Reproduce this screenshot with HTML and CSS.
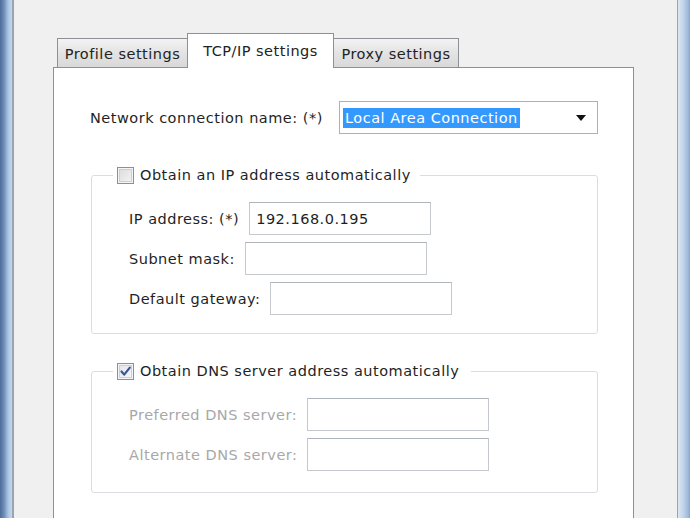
FILE: index.html
```html
<!DOCTYPE html>
<html>
<head>
    <title>Network settings</title>
    <link rel="stylesheet" href="styles.css">
</head>
<body>
    <div class="window">
        <div class="frame frame-left"></div>

        <div class="dialog">
            <div class="tabs">
                <div class="tab tab-profile">Profile settings</div>
                <div class="tab tab-tcp active">TCP/IP settings</div>
                <div class="tab tab-proxy">Proxy settings</div>
            </div>

            <div class="panel">
                <div class="conn-row">
                    <label>Network connection name: (*)</label>
                    <div class="combo">
                        <span class="combo-value">Local Area Connection</span>
                        <span class="combo-arrow"></span>
                    </div>
                </div>

                <fieldset class="group group-ip">
                    <legend>
                        <span class="check"></span>
                        Obtain an IP address automatically
                    </legend>
                    <div class="field">
                        <label>IP address: (*)</label>
                        <input type="text" value="192.168.0.195" readonly>
                    </div>
                    <div class="field">
                        <label>Subnet mask:</label>
                        <input type="text" readonly>
                    </div>
                    <div class="field">
                        <label>Default gateway:</label>
                        <input type="text" readonly>
                    </div>
                </fieldset>

                <fieldset class="group group-dns">
                    <legend>
                        <span class="check checked">
                            <svg width="15" height="15" viewBox="0 0 15 15">
                                <path d="M3.5 7.5 L6.2 10.6 L11.8 3.6" fill="none" stroke="#3f5592" stroke-width="2.2" stroke-linecap="round" stroke-linejoin="round"/>
                            </svg>
                        </span>
                        Obtain DNS server address automatically
                    </legend>
                    <div class="field disabled">
                        <label>Preferred DNS server:</label>
                        <input type="text" disabled>
                    </div>
                    <div class="field disabled">
                        <label>Alternate DNS server:</label>
                        <input type="text" disabled>
                    </div>
                </fieldset>
            </div>
        </div>

        <div class="frame frame-right"></div>
    </div>
</body>
</html>
```

FILE: styles.css
```css
html, body {
    margin: 0;
    padding: 0;
}
body {
    font-family: "DejaVu Sans", Verdana, sans-serif;
    font-size: 14.5px;
    letter-spacing: 0.5px;
    color: #1f1f1f;
    background: #f0f0f0;
}
.window {
    display: flex;
    height: 518px;
    overflow: hidden;
}
.frame {
    flex: none;
}
.frame-left {
    width: 12px;
    border-right: 2px solid #9aa4b0;
    background: linear-gradient(to right, #4d6c98 0, #6d8db8 4px, #a9c3e0 8px, #c5d8ec 12px);
}
.frame-right {
    width: 12px;
    border-left: 1px solid #9aa4b0;
    background: linear-gradient(to right, #dbe7f3 0, #c2d5ea 5px, #a7c0dd 9px, #8aa7cc 12px);
}
.dialog {
    flex: 1;
    padding: 33px 0 0 39px;
    background: #f0f0f0;
}

/* tabs */
.tabs {
    display: flex;
    align-items: flex-end;
    padding-left: 4px;
}
.tab {
    box-sizing: border-box;
    height: 29px;
    padding-top: 2px;
    display: flex;
    align-items: center;
    justify-content: center;
    border: 1px solid #8e9096;
    border-bottom: none;
    background: linear-gradient(#f3f3f3, #e3e3e3 50%, #d9d9d9);
    color: #222;
}
.tab-profile {
    width: 130px;
    border-right: none;
}
.tab-tcp {
    width: 147px;
}
.tab-proxy {
    width: 125px;
    border-left: none;
}
.tab.active {
    height: 35px;
    padding-top: 0;
    margin-bottom: -1px;
    background: #fff;
    position: relative;
    z-index: 1;
}

/* panel */
.panel {
    width: 581px;
    height: 470px;
    box-sizing: border-box;
    border: 1px solid #8e9096;
    background: #fff;
    padding: 33px 0 0 37px;
}
.conn-row {
    width: 507px;
    height: 33px;
    display: flex;
    align-items: center;
    margin-bottom: 31px;
}
.conn-row label {
    margin-left: -1px;
}
.combo {
    margin-left: auto;
    box-sizing: border-box;
    width: 259px;
    height: 33px;
    border: 1px solid #aab1bb;
    display: flex;
    align-items: center;
    padding: 0 11px 0 3px;
}
.combo-value {
    background: #3399ff;
    color: #fff;
    line-height: 20px;
    padding: 0 2px;
}
.combo-arrow {
    margin-left: auto;
    width: 0;
    height: 0;
    border-left: 5px solid transparent;
    border-right: 5px solid transparent;
    border-top: 6px solid #111;
}

/* group boxes */
.group {
    box-sizing: border-box;
    width: 507px;
    margin: 0;
    border: 1px solid #d9dde2;
    border-radius: 3px;
    padding: 17px 20px 18px 21px;
}
.group-dns {
    margin-top: 27px;
    padding-bottom: 21px;
}
legend {
    display: flex;
    align-items: center;
    gap: 6px;
    line-height: 20px;
    padding: 0 9px 0 4px;
}
.group-dns legend {
    padding-right: 12px;
}
.check {
    box-sizing: border-box;
    width: 17px;
    height: 17px;
    border: 1px solid #8f8f8f;
    background: linear-gradient(135deg, #d9d9d9, #f6f6f6);
    box-shadow: inset 0 0 0 1px #f4f4f4, inset 0 0 0 2px #cfcfcf;
    display: flex;
    align-items: center;
    justify-content: center;
}
.check.checked {
    background: linear-gradient(135deg, #dfe3ec, #f7f8fb);
}
.field {
    display: flex;
    align-items: center;
    gap: 10px;
    margin-left: 16px;
    height: 33px;
}
.field + .field {
    margin-top: 7px;
}
.field input {
    box-sizing: border-box;
    width: 182px;
    height: 33px;
    margin: 0;
    border: 1px solid #c6cace;
    border-top-color: #afb4ba;
    background: #fff;
    font: inherit;
    letter-spacing: 0.5px;
    color: #1f1f1f;
    padding: 0 6px;
    outline: none;
}
.field.disabled label {
    color: #a8a8a8;
}
```
